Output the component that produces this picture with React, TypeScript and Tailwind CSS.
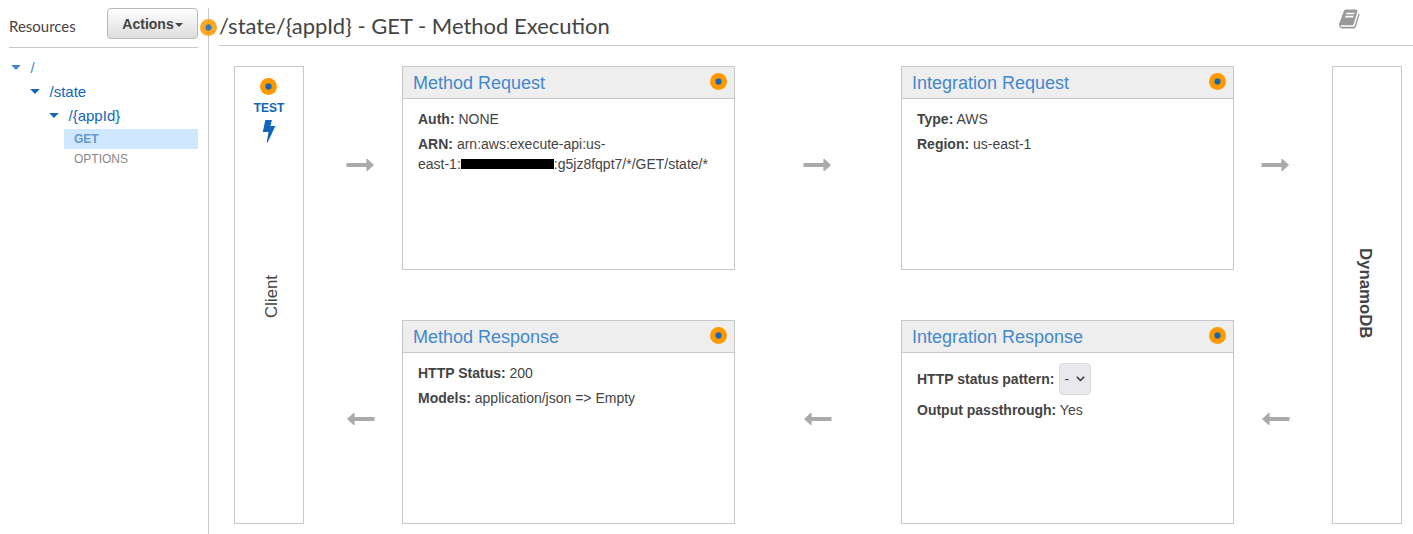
import React from "react";

const BOOK =
  "M1639 478q40 57 18 129l-275 906q-19 64-76.5 107.5t-122.5 43.5h-923q-77 0-148.5-53.5t-99.5-131.5q-24-67-2-127 0-4 3-27t4-37q1-8-3-21.5t-3-19.5q2-11 8-21t16.5-23.5 16.5-23.5q23-38 45-91.5t30-91.5q3-10 .5-30t-.5-28q3-11 17-28t17-23q21-36 42-92t25-90q1-9-2.5-32t.5-28q4-13 22-30.5t22-22.5q19-26 42.5-84.5t27.5-96.5q1-8-3-25.5t-2-26.5q2-8 9-18t18-23 17-21q8-12 16.5-30.5t15-35 16-36 19.5-32 26.5-23.5 36-11.5 47.5 5.5l-1 3q38-9 51-9h761q74 0 114 56t18 130l-274 906q-36 119-71.5 153.5t-128.5 34.5h-869q-27 0-38 15-11 16-1 43 24 70 144 70h923q29 0 56-15.5t35-41.5l300-987q7-22 5-57 38 15 59 43zm-1064 2q-4 13 2 22.5t20 9.5h608q13 0 25.5-9.5t16.5-22.5l21-64q4-13-2-22.5t-20-9.5h-608q-13 0-25.5 9.5t-16.5 22.5zm-83 256q-4 13 2 22.5t20 9.5h608q13 0 25.5-9.5t16.5-22.5l21-64q4-13-2-22.5t-20-9.5h-608q-13 0-25.5 9.5t-16.5 22.5z";

function Dot({ className = "" }: { className?: string }) {
  return (
    <svg width="17" height="17" viewBox="0 0 17 17" className={`shrink-0 ${className}`}>
      <circle cx="8.5" cy="8.5" r="8.5" fill="#ff9900" />
      <circle cx="8.5" cy="8.5" r="3.4" fill="#8a7f45" />
      <circle cx="8.5" cy="8.5" r="2.7" fill="#1166bb" />
    </svg>
  );
}

function Arrow({ left = false }: { left?: boolean }) {
  return (
    <svg width="28" height="12" viewBox="0 0 28 12" className={left ? "-scale-x-100" : ""}>
      <path d="M0.5 4H20.4V0H21.5L28 6L21.5 12H20.4V8H0.5Z" fill="#aaaaaa" />
    </svg>
  );
}

function Arrows({ className }: { className: string }) {
  return (
    <div className={`flex flex-col gap-[242px] pt-[93px] ${className}`}>
      <Arrow />
      <div className="pl-px">
        <Arrow left />
      </div>
    </div>
  );
}

function Caret({ className = "" }: { className?: string }) {
  return (
    <svg width="10" height="5" viewBox="0 0 10 5" className={`shrink-0 ${className}`}>
      <path d="M0.2 0H9.8L5 5Z" fill="currentColor" />
    </svg>
  );
}

function Panel({ title, children }: { title: string; children: React.ReactNode }) {
  return (
    <section className="h-[204px] w-[333px] border border-[#c8c8c8]">
      <header className="flex h-8 items-center justify-between border-b border-[#c8c8c8] bg-[#eeeeee] pr-[7px] pl-[10px]">
        <h2 className="text-[18px] leading-[30px] text-[#4488cc]">{title}</h2>
        <Dot className="mb-[2px]" />
      </header>
      <div className="flex flex-col gap-[5px] px-[15px] pt-[10px]">{children}</div>
    </section>
  );
}

function Field({ label, children }: { label: string; children: React.ReactNode }) {
  return (
    <p>
      <b>{label}:</b> {children}
    </p>
  );
}

export default function App() {
  return (
    <div className="flex h-[534px] w-[1413px] overflow-hidden bg-white font-['Liberation_Sans',Arial,sans-serif] text-[14px] leading-[20px] text-[#444444]">
      <aside className="w-[208px] shrink-0 pt-2 pr-[10px] pl-[9px]">
        <div className="flex h-10 justify-between border-b border-[#c8c8c8]">
          <span className="pt-2 font-[Lato,sans-serif] text-[15px]">Resources</span>
          <button className="flex h-[31px] w-[91px] items-center justify-center gap-px rounded-[4px] border border-[#b8b8b8] bg-linear-to-b from-white to-[#dddddd] text-[14px] font-bold">
            Actions
            <svg width="8" height="4" viewBox="0 0 8 4" className="mt-[2px]">
              <path d="M0 0H8L4 4Z" fill="currentColor" />
            </svg>
          </button>
        </div>
        <nav className="flex flex-col pt-2 text-[15px] leading-6 text-[#1166bb]">
          <div className="flex items-center gap-[9.5px] pl-[2px] text-[#4488cc]">
            <Caret className="mb-px" />
            <span>/</span>
          </div>
          <div className="flex items-center gap-[9.5px] pl-[21px]">
            <Caret className="mb-px" />
            <span>/state</span>
          </div>
          <div className="flex items-center gap-[9.5px] pl-[40px]">
            <Caret className="mb-px" />
            <span>/{"{appId}"}</span>
          </div>
          <div className="mt-px ml-[55px] h-5 bg-[#cfe7ff] pl-[10px] text-[12px] leading-5 font-bold text-[#6699cc]">GET</div>
          <div className="ml-[55px] h-5 pl-[10px] text-[12px] leading-5 text-[#888888]">OPTIONS</div>
        </nav>
      </aside>
      <main className="relative mt-2 min-w-0 flex-1 border-l border-[#c8c8c8] pl-[10px]">
        <Dot className="absolute top-[11px] -left-[9px] opacity-85" />
        <header className="flex h-[38px] items-start justify-between border-b border-[#c8c8c8] pr-[52px]">
          <h1 className="pt-[3px] font-[Lato,sans-serif] text-[22px] leading-[30px]">
            /state/{"{appId}"} - GET - Method Execution
          </h1>
          <svg width="22" height="22" viewBox="0 0 1792 1792">
            <path d={BOOK} fill="#999999" />
          </svg>
        </header>
        <div className="flex pt-5 pl-[15px]">
          <div className="flex h-[458px] w-[70px] flex-col items-center border border-[#c8c8c8] pt-[11px]">
            <Dot className="mr-px" />
            <span className="mt-1 text-[12px] leading-[18px] font-bold text-[#1166bb]">TEST</span>
            <svg width="14" height="24" viewBox="0 0 14 24" className="mt-[3px]">
              <path d="M3.3 0H9.9L8.4 6H13.4L5.6 22.4H4.7L6.5 12H0.8Z" fill="#1166bb" />
            </svg>
            <span className="mt-[131px] ml-[5px] rotate-180 text-[16.8px] leading-5 [writing-mode:vertical-rl]">Client</span>
          </div>
          <Arrows className="w-[98px] pl-[42px]" />
          <div className="flex flex-col gap-[50px]">
            <Panel title="Method Request">
              <Field label="Auth">NONE</Field>
              <Field label="ARN">
                arn:aws:execute-api:us-
                <br />
                east-1:
                <span className="inline-block h-[10px] w-[93px] bg-black" />
                :g5jz8fqpt7/*/GET/state/*
              </Field>
            </Panel>
            <Panel title="Method Response">
              <Field label="HTTP Status">200</Field>
              <Field label="Models">application/json =&gt; Empty</Field>
            </Panel>
          </div>
          <Arrows className="w-[166px] pl-[68px]" />
          <div className="flex flex-col gap-[50px]">
            <Panel title="Integration Request">
              <Field label="Type">AWS</Field>
              <Field label="Region">us-east-1</Field>
            </Panel>
            <Panel title="Integration Response">
              <div className="flex h-8 items-center gap-[5px]">
                <b>HTTP status pattern:</b>
                <button className="flex h-8 w-8 items-center justify-between rounded-[4px] border border-[#dcdce0] bg-[#e9e9ed] pr-[5px] pl-1 text-[14px]">
                  -
                  <svg width="9" height="6" viewBox="0 0 9 6">
                    <path d="M0.8 0.8L4.5 4.5L8.2 0.8" fill="none" stroke="#333333" strokeWidth="1.5" />
                  </svg>
                </button>
              </div>
              <Field label="Output passthrough">Yes</Field>
            </Panel>
          </div>
          <Arrows className="w-[98px] pl-[27px]" />
          <div className="flex h-[458px] w-[70px] flex-col items-center border border-[#c8c8c8] pt-[181px]">
            <span className="mr-[5px] text-[16.8px] leading-5 font-bold [writing-mode:vertical-rl]">DynamoDB</span>
          </div>
        </div>
      </main>
    </div>
  );
}
